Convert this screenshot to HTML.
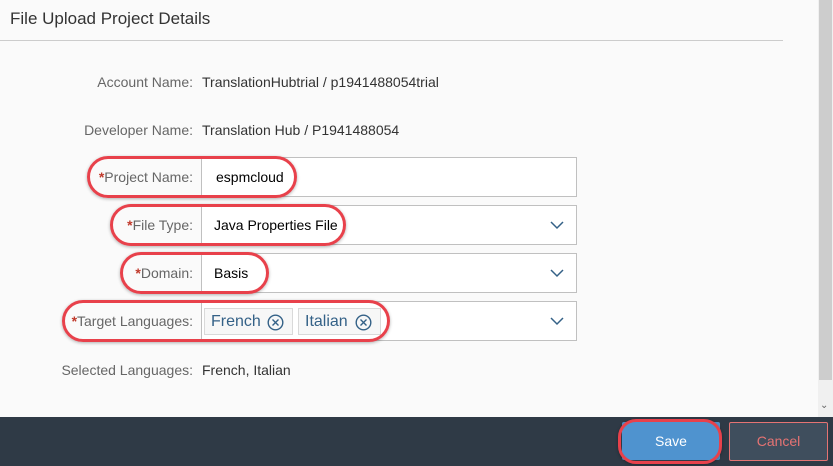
<!DOCTYPE html>
<html><head><style>
body{margin:0;width:833px;height:466px;overflow:hidden;background:#fafafa;font-family:"Liberation Sans",Arial,sans-serif;position:relative}
.a{position:absolute}
.lbl{position:absolute;right:640px;font-size:14px;color:#666;text-align:right;white-space:nowrap}
.val{position:absolute;left:202px;font-size:14px;color:#333}
.inp{position:absolute;left:201px;background:#fff;border:1px solid #c0c0c0;box-sizing:border-box;width:376px;height:40px}
.inp span{position:absolute;left:12px;top:11px;font-size:14px;color:#000}
.chev{position:absolute;right:12px;top:14px}
.ov{position:absolute;border:3px solid #e8414b;border-radius:22px;box-sizing:border-box;box-shadow:0 1px 3px rgba(0,0,0,.3)}
.star{color:#c0392b;font-weight:bold}
.tok{position:absolute;top:6px;height:27px;border:1px solid #d9d9d9;background:#f7f7f7;box-sizing:border-box;font-size:16px;color:#346187;padding:4px 6px;white-space:nowrap}
.tok svg{position:absolute;right:8px;top:5px}
</style></head><body>
<div class="a" style="left:10px;top:9px;font-size:17px;color:#333">File Upload Project Details</div>
<div class="a" style="left:0;top:40px;width:783px;height:1px;background:#ccc"></div>
<div class="a" style="left:818px;top:0;width:15px;height:417px;background:#f0f0f0"></div>
<div class="a" style="left:819px;top:0;width:13px;height:380px;background:#cdcdcd"></div>
<div class="a" style="left:820px;top:400px;font-size:10px;color:#666">⌄</div>

<div class="lbl" style="top:74px">Account Name:</div><div class="val" style="top:74px">TranslationHubtrial / p1941488054trial</div>
<div class="lbl" style="top:122px">Developer Name:</div><div class="val" style="top:122px">Translation Hub / P1941488054</div>

<div class="inp" style="top:157px"><span style="left:14px">espmcloud</span></div>
<div class="lbl" style="top:169px"><span class="star">*</span>Project Name:</div>
<div class="inp" style="top:205px"><span>Java Properties File</span><svg class="chev" width="14" height="10"><path d="M1 2l6 6 6-6" stroke="#346187" stroke-width="1.5" fill="none"/></svg></div>
<div class="lbl" style="top:217px"><span class="star">*</span>File Type:</div>
<div class="inp" style="top:253px"><span>Basis</span><svg class="chev" width="14" height="10"><path d="M1 2l6 6 6-6" stroke="#346187" stroke-width="1.5" fill="none"/></svg></div>
<div class="lbl" style="top:265px"><span class="star">*</span>Domain:</div>
<div class="inp" style="top:301px">
<div class="tok" style="left:2px;width:89px">French<svg width="17" height="17"><circle cx="8.5" cy="8.5" r="7.3" stroke="#346187" stroke-width="1.4" fill="none"/><path d="M5.5 5.5l6 6M11.5 5.5l-6 6" stroke="#346187" stroke-width="1.4"/></svg></div>
<div class="tok" style="left:96px;width:83px">Italian<svg width="17" height="17"><circle cx="8.5" cy="8.5" r="7.3" stroke="#346187" stroke-width="1.4" fill="none"/><path d="M5.5 5.5l6 6M11.5 5.5l-6 6" stroke="#346187" stroke-width="1.4"/></svg></div>
<svg class="chev" width="14" height="10"><path d="M1 2l6 6 6-6" stroke="#346187" stroke-width="1.5" fill="none"/></svg></div>
<div class="lbl" style="top:313px"><span class="star">*</span>Target Languages:</div>
<div class="lbl" style="top:362px">Selected Languages:</div><div class="val" style="top:362px">French, Italian</div>

<div class="ov" style="left:87px;top:156px;width:210px;height:42px"></div>
<div class="ov" style="left:110px;top:204px;width:236px;height:42px"></div>
<div class="ov" style="left:120px;top:252px;width:149px;height:42px"></div>
<div class="ov" style="left:62px;top:300px;width:328px;height:42px"></div>

<div class="a" style="left:0;top:417px;width:833px;height:49px;background:#2f3a46"></div>
<div class="a" style="left:622px;top:422px;width:98px;height:38px;background:#4f93cf;border-radius:2px;color:#fff;font-size:14px;text-align:center;line-height:38px">Save</div>
<div class="ov" style="left:618px;top:419px;width:104px;height:45px;border-radius:18px"></div>
<div class="a" style="left:729px;top:422px;width:99px;height:39px;background:#3f4e5d;border:1px solid #e57373;box-sizing:border-box;border-radius:2px;color:#e57373;font-size:14px;text-align:center;line-height:37px">Cancel</div>
</body></html>
